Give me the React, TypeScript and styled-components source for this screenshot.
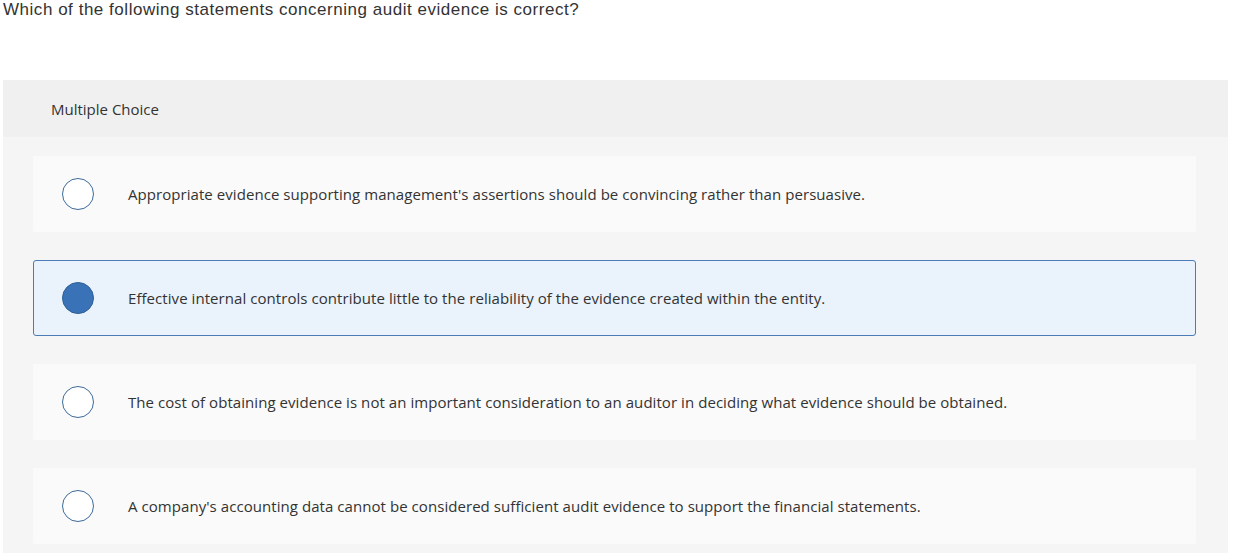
import React from "react";
import styled, { createGlobalStyle } from "styled-components";

const GlobalStyle = createGlobalStyle`
  html, body {
    margin: 0;
    padding: 0;
    background: #ffffff;
  }
  body {
    font-family: "Open Sans", "Liberation Sans", sans-serif;
    color: #333333;
  }
`;

const options = [
  "Appropriate evidence supporting management's assertions should be convincing rather than persuasive.",
  "Effective internal controls contribute little to the reliability of the evidence created within the entity.",
  "The cost of obtaining evidence is not an important consideration to an auditor in deciding what evidence should be obtained.",
  "A company's accounting data cannot be considered sufficient audit evidence to support the financial statements.",
];

const App = () => {
  const selected = 1;
  return (
    <Page>
      <GlobalStyle />
      <Question>Which of the following statements concerning audit evidence is correct?</Question>
      <Panel>
        <PanelHeader>Multiple Choice</PanelHeader>
        <OptionList>
          {options.map((text, i) => (
            <Option key={i} $selected={i === selected}>
              <Radio $checked={i === selected} />
              <OptionText>{text}</OptionText>
            </Option>
          ))}
        </OptionList>
      </Panel>
    </Page>
  );
};

export default App;

// style
const Page = styled.div`
  width: 1243px;
  height: 554px;
  overflow: hidden;
  padding: 0 15px 0 3px;
  box-sizing: border-box;
`;
const Question = styled.div`
  font-family: "Liberation Sans", Arial, sans-serif;
  font-size: 17px;
  letter-spacing: 0.53px;
  line-height: 19px;
  color: #333333;
  margin: 0;
  height: 80px;
`;
const Panel = styled.div`
  background: #f5f5f5;
  border-radius: 2px 2px 0 0;
  padding-bottom: 9px;
`;
const PanelHeader = styled.div`
  background: #f0f0f0;
  height: 57px;
  display: flex;
  align-items: center;
  padding-left: 48px;
  font-size: 15px;
  color: #333333;
`;
const OptionList = styled.div`
  display: flex;
  flex-direction: column;
  gap: 28px;
  padding: 19px 32px 0 30px;
`;
const Option = styled.div<{ $selected: boolean }>`
  height: 76px;
  box-sizing: border-box;
  display: flex;
  align-items: center;
  padding-left: ${(p) => (p.$selected ? "28px" : "29px")};
  background: ${(p) => (p.$selected ? "#eaf2fb" : "#fafafa")};
  border: ${(p) => (p.$selected ? "1px solid #4b7cb6" : "none")};
  border-radius: 3px;
`;
const Radio = styled.span<{ $checked: boolean }>`
  width: 32px;
  height: 32px;
  box-sizing: border-box;
  border-radius: 50%;
  flex-shrink: 0;
  border: 1.5px solid ${(p) => (p.$checked ? "#2f5f96" : "#3d6a99")};
  background: ${(p) => (p.$checked ? "#3a72b8" : "#ffffff")};
`;
const OptionText = styled.span`
  margin-left: 34px;
  font-size: 15px;
  letter-spacing: 0.06px;
  color: #333333;
`;
